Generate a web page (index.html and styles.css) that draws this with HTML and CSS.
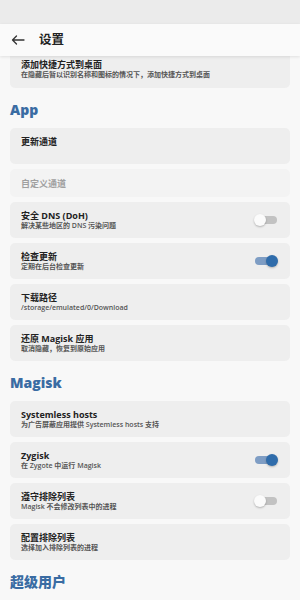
FILE: index.html
```html
<!DOCTYPE html>
<html lang="zh-CN">
<head>
<meta charset="utf-8">
<link rel="stylesheet" href="styles.css">
</head>
<body>
<div class="statusbar"></div>
<header class="toolbar">
  <svg class="back" width="14" height="12" viewBox="0 0 14 12"><path d="M13 6H1.5M5.5 2L1.5 6L5.5 10" fill="none" stroke="#333" stroke-width="1.3" stroke-linecap="round" stroke-linejoin="round"/></svg>
  <span class="title">设置</span>
</header>
<main class="viewport">
  <div class="list">
    <div class="card"><div class="text"><div class="t">添加快捷方式到桌面</div><div class="s">在隐藏后暂以识别名称和图标的情况下，添加快捷方式到桌面</div></div></div>

    <h2 class="section">App</h2>
    <div class="card"><div class="text"><div class="t">更新通道</div></div></div>
    <div class="card small disabled"><div class="text"><div class="t">自定义通道</div></div></div>
    <div class="card"><div class="text"><div class="t">安全 DNS (DoH)</div><div class="s">解决某些地区的 DNS 污染问题</div></div><span class="switch"></span></div>
    <div class="card"><div class="text"><div class="t">检查更新</div><div class="s">定期在后台检查更新</div></div><span class="switch on"></span></div>
    <div class="card"><div class="text"><div class="t">下载路径</div><div class="s">/storage/emulated/0/Download</div></div></div>
    <div class="card"><div class="text"><div class="t">还原 Magisk 应用</div><div class="s">取消隐藏，恢复到原始应用</div></div></div>

    <h2 class="section">Magisk</h2>
    <div class="card"><div class="text"><div class="t">Systemless hosts</div><div class="s">为广告屏蔽应用提供 Systemless hosts 支持</div></div></div>
    <div class="card"><div class="text"><div class="t">Zygisk</div><div class="s">在 Zygote 中运行 Magisk</div></div><span class="switch on"></span></div>
    <div class="card"><div class="text"><div class="t">遵守排除列表</div><div class="s">Magisk 不会修改列表中的进程</div></div><span class="switch"></span></div>
    <div class="card"><div class="text"><div class="t">配置排除列表</div><div class="s">选择加入排除列表的进程</div></div></div>

    <h2 class="section">超级用户</h2>
    <div class="card"></div>
  </div>
</main>
</body>
</html>
```
FILE: styles.css
```css
* { box-sizing: border-box; }
html, body { margin: 0; padding: 0; }
body {
  width: 300px;
  height: 600px;
  overflow: hidden;
  background: #f8f8f8;
  font-family: "Open Sans", "Noto Sans CJK SC", sans-serif;
  color: #222;
  display: flex;
  flex-direction: column;
}
.statusbar {
  height: 24px;
  background: #ebebeb;
  flex: none;
}
.toolbar {
  height: 32px;
  flex: none;
  display: flex;
  align-items: center;
  padding-left: 11px;
  gap: 14px;
  background: #fafafa;
  position: relative;
  z-index: 2;
  box-shadow: 0 1px 3px rgba(0,0,0,0.10);
}
.back { display: block; }
.title {
  font-size: 12.5px;
  font-weight: 700;
  color: #222;
  line-height: 16px;
}
.viewport {
  flex: 1;
  overflow: hidden;
  padding: 0 10px;
}
.list {
  margin-top: -5px;
  display: flex;
  flex-direction: column;
  gap: 5px;
}
.card {
  height: 36px;
  flex: none;
  background: #eeeeee;
  border-radius: 5px;
  padding: 8px 13px 0 11px;
  display: flex;
  align-items: flex-start;
}
.card:first-child { height: 37px; }
.card.small {
  height: 28px;
  padding-top: 9px;
}
.card.disabled { background: #f3f3f3; }
.card.disabled .t { color: #a0a0a0; font-weight: 600; }
.text { flex: 1; min-width: 0; }
.t {
  font-size: 9px;
  line-height: 11px;
  font-weight: 700;
  color: #222;
  white-space: nowrap;
}
.s {
  font-size: 7px;
  line-height: 9px;
  font-weight: 600;
  color: #555;
  white-space: nowrap;
}
.section {
  margin: -5px 0;
  padding: 12px 0 8px;
  font-size: 14px;
  line-height: 20px;
  font-weight: 800;
  color: #3a6ca3;
  height: 40px;
  flex: none;
}
.switch {
  align-self: center;
  margin-top: -8px;
  position: relative;
  width: 22px;
  height: 8px;
  border-radius: 4px;
  background: #c2c2c2;
  flex: none;
}
.switch::after {
  content: "";
  position: absolute;
  top: -2px;
  left: -1px;
  width: 12px;
  height: 12px;
  border-radius: 50%;
  background: #fbfbfb;
  box-shadow: 0 1px 2px rgba(0,0,0,0.25);
}
.switch.on { background: #7e9dc4; }
.switch.on::after {
  left: auto;
  right: -1px;
  background: #2f6cab;
}
```
